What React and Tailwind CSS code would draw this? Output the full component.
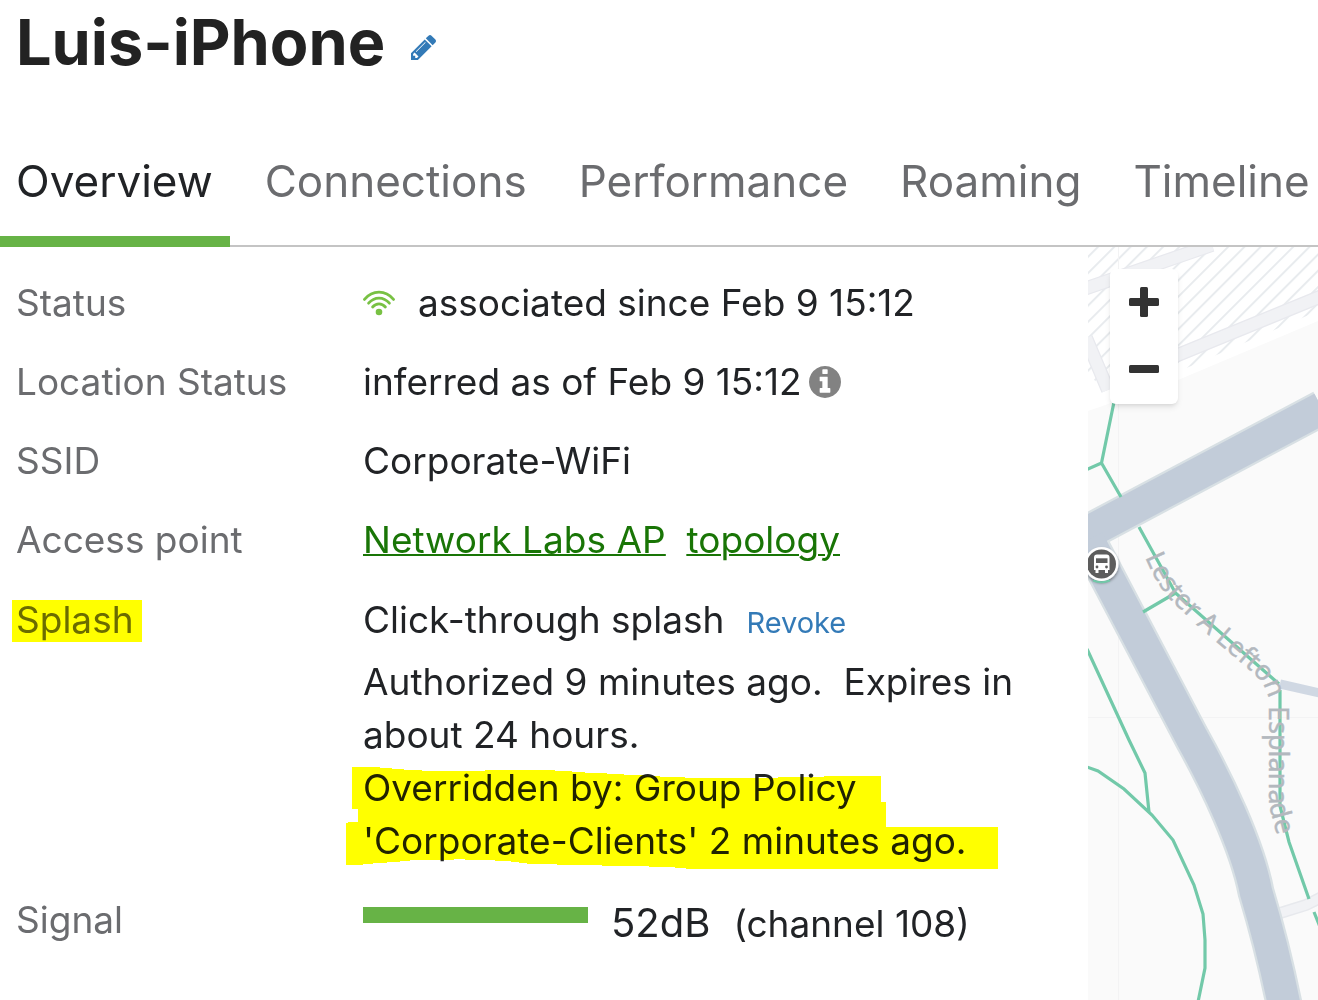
import React from "react";

const tabs = ["Overview", "Connections", "Performance", "Roaming", "Timeline"];

function PencilIcon() {
  return (
    <svg viewBox="0 -1387 1515 1515" className="size-[25px] fill-[#337ab7]" aria-hidden="true">
      <path
        transform="scale(1 -1)"
        d="M363 0l91 91l-235 235l-91 -91v-107h128v-128h107zM886 928q0 22 -22 22q-10 0 -17 -7l-542 -542q-7 -7 -7 -17q0 -22 22 -22q10 0 17 7l542 542q7 7 7 17zM832 1120l416 -416l-832 -832h-416v416zM1515 1024q0 -53 -37 -90l-166 -166l-416 416l166 165q36 38 90 38q53 0 91 -38l235 -234q37 -39 37 -91z"
      />
    </svg>
  );
}

function InfoIcon() {
  return (
    <svg viewBox="0 -1408 1536 1536" className="size-8 fill-[#828282]" aria-hidden="true">
      <path
        transform="scale(1 -1)"
        d="M1024 160v160q0 14 -9 23t-23 9h-96v512q0 14 -9 23t-23 9h-320q-14 0 -23 -9t-9 -23v-160q0 -14 9 -23t23 -9h96v-320h-96q-14 0 -23 -9t-9 -23v-160q0 -14 9 -23t23 -9h448q14 0 23 9t9 23zM896 1056v160q0 14 -9 23t-23 9h-192q-14 0 -23 -9t-9 -23v-160q0 -14 9 -23t23 -9h192q14 0 23 9t9 23zM1536 640q0 -209 -103 -385.5t-279.5 -279.5t-385.5 -103t-385.5 103t-279.5 279.5t-103 385.5t103 385.5t279.5 279.5t385.5 103t385.5 -103t279.5 -279.5t103 -385.5z"
      />
    </svg>
  );
}

function WifiIcon() {
  return (
    <svg viewBox="0 0 32 26" className="h-[26px] w-8" fill="none" stroke="#78c143" strokeWidth="2.8" strokeLinecap="round" aria-hidden="true">
      <path d="M1.5 9.400C9.500-.2 22.500-.2 30.500 9.400" />
      <path d="M5.600 13.200C11.500 6.400 20.500 6.400 26.400 13.200" />
      <path d="M9.600 17C13.200 12.800 18.800 12.800 22.400 17" />
      <circle cx="16" cy="22" r="3.300" fill="#78c143" stroke="none" />
    </svg>
  );
}

function HighlightMark() {
  return (
    <svg
      viewBox="346 767 652 103"
      className="pointer-events-none absolute top-[6px] -left-[17px] h-[103px] w-[652px] mix-blend-multiply"
      aria-hidden="true"
    >
      <path
        fill="#ffff00"
        d="M352 767H380V768H392V769H404V770H422V771H485V770H555V771H572V772H585V773H607V774H624V775H645V776H660V777H685V778H778V777H824V776H881V802H886V827H998V869H686V868H675V867H649V866H602V865H557V864H527V863H519V862H511V861H495V860H465V859H454V860H410V861H400V862H387V863H373V864H363V865H346V823H348V822H358V809H352Z"
      />
    </svg>
  );
}

function MapView() {
  return (
    <svg viewBox="1088 247 230 753" preserveAspectRatio="xMinYMin slice" className="absolute inset-0 h-full w-full" role="img" aria-label="Map">
      <defs>
        <pattern id="hatch" width="11.500" height="11.500" patternUnits="userSpaceOnUse" patternTransform="rotate(-45 1088 247)">
          <rect width="11.500" height="2" fill="#e8ebee" />
        </pattern>
        <path id="street" d="M1145 557L1149 566Q1160 590 1175 604L1200 628L1232 655L1252 672Q1266 684 1269 700V796Q1269 808 1272 816L1282 856" />
        <filter id="pinShadow" x="-50%" y="-50%" width="200%" height="200%">
          <feDropShadow dx="0" dy="2" stdDeviation="1.500" floodOpacity=".4" />
        </filter>
      </defs>
      <rect x="1088" y="247" width="230" height="753" fill="#fafafa" />
      <path d="M1088 247H1318V321L1178 380L1088 411Z" fill="#fff" />
      <path d="M1088 247H1318V311L1168 376L1104 392L1088 372Z" fill="url(#hatch)" />
      <path d="M1084 289L1212 245M1168 359L1322 296M1086 338L1108 390" stroke="#e8e9ee" strokeWidth="14" fill="none" />
      <path d="M1084 289L1212 245M1168 359L1322 296M1086 338L1108 390" stroke="#f1f2f5" strokeWidth="11.500" fill="none" />
      <path d="M1118.500 247V1000M1088 717.500H1318" stroke="#f3f3f4" strokeWidth="1" />

      <path d="M1280 684L1320 693" stroke="#d0d8e3" strokeWidth="9" />
      <path d="M1277 914L1306 905L1322 897" stroke="#e7e9ed" strokeWidth="12" fill="none" />
      <path d="M1277 914L1306 905L1322 897" stroke="#f1f2f5" strokeWidth="9" fill="none" />

      <g fill="none" stroke="#d8e0e4" strokeWidth="37">
        <path d="M1080 537L1100 526L1322 408" />
        <path d="M1088 540L1192 738C1216 781 1247 845 1256 892Q1272 945 1284 1004" />
      </g>
      <g fill="none" stroke="#c2ccd9" strokeWidth="32.500">
        <path d="M1080 537L1100 526L1322 408" />
        <path d="M1088 540L1192 738C1216 781 1247 845 1256 892Q1272 945 1284 1004" />
      </g>

      <g fill="none" stroke="#72c9a9" strokeWidth="3.200">
        <path d="M1114 402L1101.500 463L1121 497M1086 470L1101.500 463" />
        <path d="M1139 527L1175.500 593L1279 684M1143 612L1175.500 593M1280 690V806L1289 842L1309 899M1314 912L1320 927" />
        <path d="M1087 649L1129 740L1145 773L1149 812" />
        <path d="M1087 767L1098 771L1124 789L1152 815L1173 840L1194 885L1203 914L1205 940V968L1198 1002" />
      </g>

      <text className="font-['Noto_Sans'] text-[27px]" fill="#b3b8be" stroke="#b3b8be" strokeWidth=".4">
        <textPath href="#street">Lester A Lefton Esplanade</textPath>
      </text>

      <g>
        <circle cx="1101.500" cy="564" r="17" fill="#fff" filter="url(#pinShadow)" />
        <path d="M1093 580.500Q1101.500 584 1110 580.500" fill="none" stroke="#72c9a9" strokeWidth="2" />
        <circle cx="1101.500" cy="564" r="14.500" fill="#5d5d5d" />
        <path fill="#fff" d="M1097 554.500h9.500q3 0 3 3v12.500h-1.500v3h-3v-3h-6.500v3h-3v-3h-1.500v-12.500q0-3 3-3z" />
        <path fill="#5d5d5d" d="M1096 558.300h11.500v4.700h-11.500z" />
        <circle cx="1097" cy="567" r="1.400" fill="#5d5d5d" />
        <circle cx="1106.500" cy="567" r="1.400" fill="#5d5d5d" />
      </g>
    </svg>
  );
}

function Row({ label, children }) {
  return (
    <div className="flex">
      <dt className="w-[347px] shrink-0 text-[#6b6c6f]">{label}</dt>
      <dd className="min-w-0 flex-1">{children}</dd>
    </div>
  );
}

export default function App() {
  return (
    <div className="flex min-h-screen flex-col overflow-hidden bg-white font-['Inter',sans-serif] text-[#212326]">
      <header className="flex items-center gap-[26px] px-4 pt-[2px]">
        <h1 className="text-[63px] leading-[80px] font-bold text-[#222]">Luis-iPhone</h1>
        <button type="button" aria-label="Edit name" className="pt-[10px]">
          <PencilIcon />
        </button>
      </header>

      <nav className="mt-9 flex gap-[19px] border-b-2 border-[#c4c4c4] text-[44px] leading-[52px] whitespace-nowrap">
        {tabs.map((tab, i) => (
          <a
            key={tab}
            href={"#" + tab.toLowerCase()}
            aria-current={i === 0 ? "page" : undefined}
            className={
              i === 0
                ? "-mb-0.5 border-b-[11px] border-[#67b346] pt-[37px] pr-[17px] pb-[29px] pl-4"
                : "pt-[37px] pr-[17px] pl-4 text-[#6b6c6f]"
            }
          >
            {tab}
          </a>
        ))}
      </nav>

      <main className="flex flex-1">
        <dl className="flex min-w-0 flex-1 flex-col gap-[26px] px-4 pt-[29px] pr-10 pb-8 text-[37px] leading-[53px]">
          <Row label="Status">
            <span className="flex items-center gap-[23px]">
              <WifiIcon />
              associated since Feb 9 15:12
            </span>
          </Row>
          <Row label="Location Status">
            <span className="flex items-center gap-[7px]">
              inferred as of Feb 9 15:12
              <button type="button" aria-label="Location information">
                <InfoIcon />
              </button>
            </span>
          </Row>
          <Row label="SSID">Corporate-WiFi</Row>
          <Row label="Access point">
            <span className="flex gap-[21px] text-[#197506] underline decoration-2">
              <a href="#access-point">Network Labs AP</a>
              <a href="#topology">topology</a>
            </span>
          </Row>
          <Row
            label={
              <span className="relative leading-[56px]">
                Splash
                <span className="pointer-events-none absolute top-[3px] -right-2 -left-1 h-[42px] bg-[#ffff00] mix-blend-multiply" />
              </span>
            }
          >
            <div className="mb-1 flex items-baseline gap-[22px] leading-[56px]">
              Click-through splash
              <button type="button" className="text-[29px] text-[#337ab7]">
                Revoke
              </button>
            </div>
            <p>Authorized 9 minutes ago.&nbsp; Expires in about 24 hours.</p>
            <p className="relative">
              Overridden by: Group Policy 'Corporate-Clients' 2 minutes ago.
              <HighlightMark />
            </p>
          </Row>
          <Row label="Signal">
            <div className="flex items-start gap-[23px]">
              <div className="mt-[14px] h-4 w-[225px] bg-[#67b346]" role="img" aria-label="Signal strength" />
              <div className="flex items-baseline gap-[23px] pt-[3px]">
                <span className="text-[40px]">52dB</span>
                <span>(channel 108)</span>
              </div>
            </div>
          </Row>
        </dl>

        <aside className="relative w-[230px] shrink-0 overflow-hidden">
          <MapView />
          <div className="absolute top-[22px] left-[22px] flex w-[68px] flex-col rounded-md bg-white shadow-md">
            <button type="button" aria-label="Zoom in" className="flex h-[65px] items-center justify-center">
              <svg viewBox="0 0 30 30" className="size-[30px] fill-[#333]" aria-hidden="true">
                <rect x="0" y="11" width="30" height="8" rx="1.500" />
                <rect x="11" y="0" width="8" height="30" rx="1.500" />
              </svg>
            </button>
            <button type="button" aria-label="Zoom out" className="flex h-[70px] items-center justify-center">
              <svg viewBox="0 0 30 30" className="size-[30px] fill-[#333]" aria-hidden="true">
                <rect x="0" y="11" width="30" height="8" rx="1.500" />
              </svg>
            </button>
          </div>
        </aside>
      </main>
    </div>
  );
}
